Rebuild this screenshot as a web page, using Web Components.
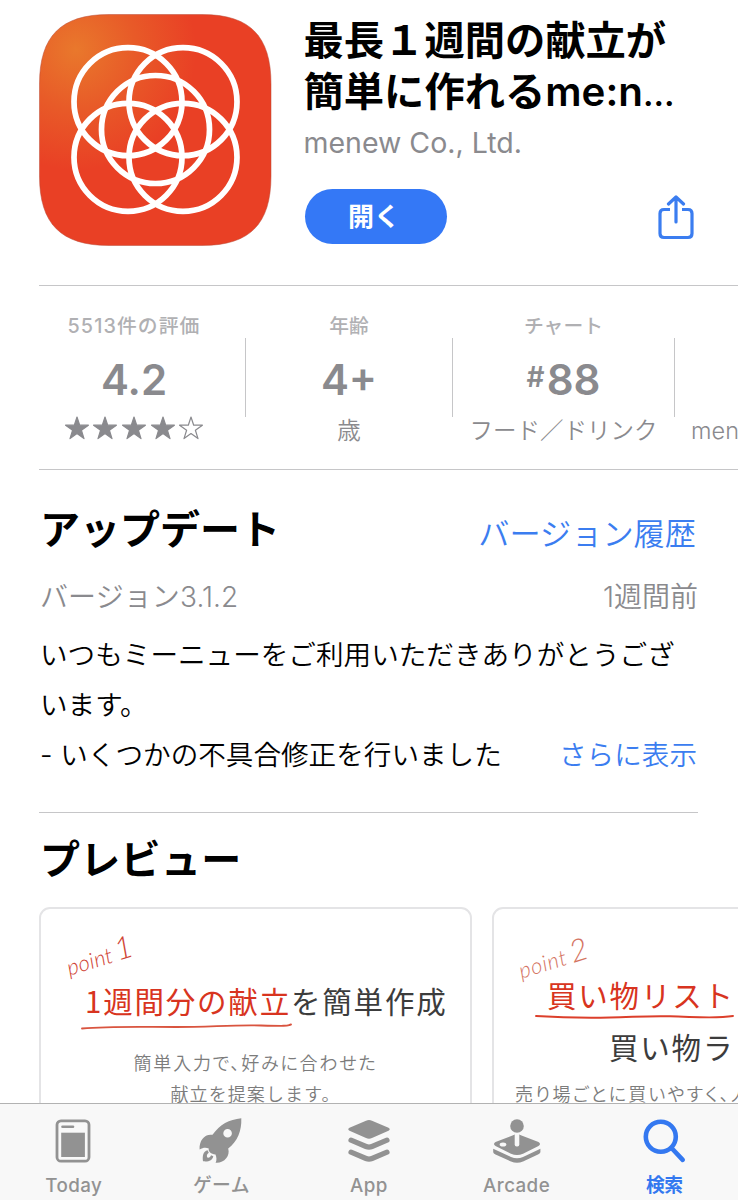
<!DOCTYPE html>
<html lang="ja">
<head>
<meta charset="utf-8">
<title>App Store</title>
<style>
  body {
    margin: 0;
    background: #fff;
    font-family: Inter, "Noto Sans CJK JP", sans-serif;
    color: #000;
  }
</style>
</head>
<body>
<store-page>
  <app-header developer="menew Co., Ltd." action="開く">
    <span>最長１週間の献立が</span>
    <span>簡単に作れるme:n<small>…</small></span>
  </app-header>

  <stat-strip>
    <stat-cell style="--w: 207px; --shift: -8px; --ls: 1.100px" label="5513件の評価" value="4.2"><star-rating value="4"></star-rating></stat-cell>
    <stat-cell style="--w: 207px" label="年齢" value="4+">歳</stat-cell>
    <stat-cell style="--w: 222px" label="チャート" prefix="#" value="88">フード／ドリンク</stat-cell>
    <stat-cell style="--w: 63px; --align: left; --shift: 16px">men</stat-cell>
  </stat-strip>

  <update-section heading="アップデート" link="バージョン履歴" version="バージョン3.1.2" date="1週間前" more="さらに表示">
    <span>いつもミーニューをご利用いただきありがとうござ</span>
    <span>います。</span>
    <span>- いくつかの不具合修正を行いました</span>
  </update-section>

  <preview-section heading="プレビュー">
    <preview-card class="one" point="point" num="1">
      <span slot="title"><b>1週間分の献立</b>を簡単作成</span>
      <svg slot="line" width="212" height="7" viewBox="0 0 212 7"><path d="M1 5.500C30 3 60 4 95 4S150 1.800 180 2.500S205 2.800 210 1.500" fill="none" stroke="#d9543f" stroke-width="1.900" stroke-linecap="round"/></svg>
      <span slot="desc">簡単入力で、好みに合わせた</span>
      <span slot="desc" class="full">献立を提案します。</span>
    </preview-card>
    <preview-card class="two" point="point" num="2">
      <span slot="title"><b>買い物リスト</b></span>
      <svg slot="line" width="200" height="6" viewBox="0 0 200 6"><path d="M1 2C25 3.500 50 4 75 3.500S110 1.800 135 2.300S180 5 198 2" fill="none" stroke="#dc3f2b" stroke-width="1.900" stroke-linecap="round"/></svg>
      <span slot="second">買い物ラ</span>
      <span slot="desc">売り場ごとに買いやすく、人</span>
    </preview-card>
  </preview-section>

  <tab-bar slot="tabs">
    <tab-item icon="today">Today</tab-item>
    <tab-item icon="game">ゲーム</tab-item>
    <tab-item icon="app">App</tab-item>
    <tab-item icon="arcade">Arcade</tab-item>
    <tab-item icon="search" active>検索</tab-item>
  </tab-bar>
</store-page>

<script>
  class StorePage extends HTMLElement {
    constructor() {
      super();
      this.attachShadow({ mode: 'open' }).innerHTML = `
        <style>
          :host {
            display: flex;
            flex-direction: column;
            width: 738px;
            height: 1200px;
            overflow: hidden;
          }
          main {
            flex: 1;
            min-height: 0;
            overflow: hidden;
          }
        </style>
        <main><slot></slot></main>
        <slot name="tabs"></slot>
      `;
    }
  }

  class AppHeader extends HTMLElement {
    connectedCallback() {
      this.attachShadow({ mode: 'open' }).innerHTML = `
        <style>
          :host {
            display: flex;
            gap: 31.500px;
            padding: 14px 44px 0 39px;
            height: 285px;
            box-sizing: border-box;
          }
          .logo { display: block; flex: none; }
          .info { flex: 1; }
          h1 {
            margin: 0;
            padding-top: 1px;
            font-size: 40.300px;
            line-height: 51px;
            font-weight: 600;
            white-space: nowrap;
          }
          ::slotted(span) { display: block; }
          .dev {
            line-height: 36px;
            margin-top: 8px;
            font-size: 28.500px;
            color: #8a8a8e;
            white-space: nowrap;
          }
          .row {
            display: flex;
            justify-content: space-between;
            margin-top: 28px;
            height: 55px;
          }
          button {
            width: 142px;
            height: 55px;
            margin: 0 0 0 1px;
            padding: 0 3px 0 0;
            border: 0;
            border-radius: 28px;
            background: #3478f6;
            color: #fff;
            font: 600 26px/55px Inter, "Noto Sans CJK JP", sans-serif;
          }
          .share { margin-top: 6px; }
        </style>
        <svg class="logo" width="233" height="232" viewBox="39 14 233 232">
          <defs>
            <radialGradient id="bg" gradientUnits="userSpaceOnUse" cx="76" cy="50" r="120">
              <stop offset="0" stop-color="#e9782c"/>
              <stop offset=".5" stop-color="#e85a28"/>
              <stop offset="1" stop-color="#e94025"/>
            </radialGradient>
          </defs>
          <path d="M109 14.500H202C250 14.500 271 36 271 84V176C271 224 250 245.500 202 245.500H109C61 245.500 39.500 224 39.500 176V84C39.500 36 61 14.500 109 14.500Z" fill="url(#bg)" stroke="#b94a35" stroke-opacity=".5"/>
          <g fill="none" stroke="#fff" stroke-width="5.700">
            <circle cx="128" cy="101.700" r="54"/>
            <circle cx="183" cy="101.700" r="54"/>
            <circle cx="128" cy="157.300" r="54"/>
            <circle cx="183" cy="157.300" r="54"/>
            <circle cx="155.500" cy="129.500" r="54"/>
          </g>
        </svg>
        <div class="info">
          <h1><slot></slot></h1>
          <div class="dev">${this.getAttribute('developer')}</div>
          <div class="row">
            <button>${this.getAttribute('action')}</button>
            <svg class="share" width="36" height="45" viewBox="0 0 36 45" fill="none" stroke="#3b7df0" stroke-width="3.200" stroke-linecap="round" stroke-linejoin="round">
              <path d="M12 14.500H6Q2 14.500 2 18.500V38.500Q2 42.500 6 42.500H30Q34 42.500 34 38.500V18.500Q34 14.500 30 14.500H24" stroke-linecap="butt"/>
              <path d="M18 27V2.500M10.500 9L18 2L25.500 9"/>
            </svg>
          </div>
        </div>
      `;
      this.querySelectorAll('small').forEach((s) => {
        s.style.fontSize = '33px';
        s.style.lineHeight = '1';
      });
    }
  }

  class StatStrip extends HTMLElement {
    constructor() {
      super();
      this.attachShadow({ mode: 'open' }).innerHTML = `
        <style>
          :host {
            display: flex;
            margin-left: 39px;
            height: 183px;
            border-top: 1px solid #c6c6c8;
            border-bottom: 1px solid #c6c6c8;
            overflow: hidden;
          }
        </style>
        <slot></slot>
      `;
    }
  }

  class StatCell extends HTMLElement {
    connectedCallback() {
      const prefix = this.getAttribute('prefix') || '';
      this.attachShadow({ mode: 'open' }).innerHTML = `
        <style>
          :host {
            display: flex;
            flex: none;
            width: var(--w);
            white-space: nowrap;
            text-align: var(--align, center);
            color: #8a8a8e;
          }
          .body {
            flex: 1;
            min-width: 0;
            padding-top: 25px;
            display: grid;
            grid-template-rows: 26px 86px 15px;
            align-items: center;
            transform: translateX(var(--shift, 0));
          }
          .label {
            font-size: 19.800px;
            font-weight: 500;
            color: #b0b0b3;
            letter-spacing: var(--ls, 0);
          }
          .value {
            font-size: 42px;
            font-weight: 600;
            line-height: 50px;
          }
          .value small {
            font-size: 28px;
            line-height: 1;
            vertical-align: 8px;
            font-weight: 600;
            margin-right: 2px;
          }
          .sub {
            font-size: 23.500px;
            line-height: 30px;
            font-weight: 350;
          }
          i {
            width: 1px;
            height: 79px;
            margin-top: 52px;
            background: #c6c6c8;
          }
          :host(:last-of-type) i { display: none; }
        </style>
        <div class="body">
          <div class="label">${this.getAttribute('label') || ''}</div>
          <div class="value">${prefix ? `<small>${prefix}</small>` : ''}${this.getAttribute('value') || ''}</div>
          <div class="sub"><slot></slot></div>
        </div>
        <i></i>
      `;
    }
  }

  class StarRating extends HTMLElement {
    connectedCallback() {
      const value = Number(this.getAttribute('value'));
      const pts = '12,1 14.700,9.200 23.400,9.200 16.400,14.300 19,22.600 12,17.500 5,22.600 7.600,14.300 0.600,9.200 9.300,9.200';
      let stars = '';
      for (let i = 0; i < 5; i++) {
        stars += `<svg width="24" height="24" viewBox="0 0 24 24"><polygon points="${pts}" fill="${i < value ? '#8a8a8e' : 'none'}" stroke="#8a8a8e" stroke-width="1.200" stroke-linejoin="round"/></svg>`;
      }
      this.attachShadow({ mode: 'open' }).innerHTML = `
        <style>
          :host { display: flex; justify-content: center; gap: 4.600px; margin-top: -6px; }
        </style>
        ${stars}
      `;
    }
  }

  class UpdateSection extends HTMLElement {
    connectedCallback() {
      const a = (n) => this.getAttribute(n);
      this.attachShadow({ mode: 'open' }).innerHTML = `
        <style>
          :host {
            display: block;
            margin: 0 40px 0 39px;
            height: 343px;
            box-sizing: border-box;
            border-bottom: 1px solid #c6c6c8;
            padding-top: 35px;
            white-space: nowrap;
            font-weight: 350;
          }
          .row {
            display: flex;
            justify-content: space-between;
            padding-left: 1px;
          }
          h2 {
            margin: 0;
            font-size: 40px;
            line-height: 50px;
            font-weight: 700;
          }
          a { color: #3b7df0; }
          .history {
            font-size: 31.200px;
            line-height: 58px;
            margin-right: 2px;
          }
          .meta {
            margin-top: 14px;
            height: 40px;
            line-height: 40px;
            font-size: 28px;
            color: #8a8a8e;
          }
          .meta span:first-child { letter-spacing: .1px; }
          .notes {
            margin-top: 13px;
            line-height: 50px;
            font-size: 27.600px;
            align-items: flex-end;
          }
          .notes a { margin-right: 1px; }
          ::slotted(span) { display: block; }
        </style>
        <div class="row">
          <h2>${a('heading')}</h2>
          <a class="history">${a('link')}</a>
        </div>
        <div class="row meta"><span>${a('version')}</span><span>${a('date')}</span></div>
        <div class="row notes">
          <div><slot></slot></div>
          <a style="margin-left: -200px">${a('more')}</a>
        </div>
      `;
    }
  }

  class PreviewSection extends HTMLElement {
    connectedCallback() {
      this.attachShadow({ mode: 'open' }).innerHTML = `
        <style>
          :host { display: block; padding: 22px 0 0 39px; }
          h2 {
            margin: 0 0 0 1px;
            font-size: 40px;
            line-height: 50px;
            font-weight: 700;
            letter-spacing: .3px;
          }
          .cards { display: flex; gap: 20px; margin-top: 22px; }
        </style>
        <h2>${this.getAttribute('heading')}</h2>
        <div class="cards"><slot></slot></div>
      `;
    }
  }

  class PreviewCard extends HTMLElement {
    connectedCallback() {
      this.attachShadow({ mode: 'open' }).innerHTML = `
        <style>
          :host {
            display: block;
            flex: none;
            box-sizing: border-box;
            width: 433px;
            height: 700px;
            border: 2px solid #e4e4e6;
            border-radius: 11px;
            font-family: "Noto Sans CJK JP", sans-serif;
            white-space: nowrap;
          }
          .point {
            width: 90px;
            height: 36px;
            margin: 24px 0 0 23px;
            font: italic 300 22px/36px Lato, sans-serif;
            letter-spacing: .2px;
            word-spacing: -2px;
            color: #d04535;
            transform: rotate(-17deg);
          }
          .point em { font-size: 31px; font-weight: 300; }
          .title, .second {
            color: #3c3c3c;
            font-size: 29.500px;
            line-height: 44px;
            letter-spacing: 1.800px;
          }
          .title { margin: 9px 0 0 44px; }
          ::slotted(svg) { display: block; margin: 1px 0 0 40px; }
          ::slotted(span) { display: block; }
          .second { display: none; }
          .desc {
            margin-top: 17px;
            text-align: center;
            font-size: 18px;
            line-height: 31px;
            letter-spacing: 1.800px;
            font-feature-settings: "palt";
            font-weight: 350;
            color: #7c7c7c;
          }
          ::slotted(.full) {
            font-feature-settings: normal;
            letter-spacing: 1.100px;
          }
          :host(.two) .point {
            margin: 27px 0 0 22px;
            color: #d47462;
            letter-spacing: .7px;
          }
          :host(.two) .title { margin: 0 0 0 53px; }
          :host(.two) ::slotted(svg) { margin: -2px 0 0 41px; }
          :host(.two) .second { display: block; margin: 4px 0 0 115px; }
          :host(.two) .desc {
            margin: 10px 0 0 21px;
            text-align: left;
            letter-spacing: 2.200px;
          }
        </style>
        <div class="point">${this.getAttribute('point')} <em>${this.getAttribute('num')}</em></div>
        <div class="title"><slot name="title"></slot></div>
        <slot name="line"></slot>
        <div class="second"><slot name="second"></slot></div>
        <div class="desc"><slot name="desc"></slot></div>
      `;
      this.querySelectorAll('b').forEach((b) => {
        b.style.fontWeight = 'inherit';
        b.style.color = '#d83420';
      });
    }
  }

  class TabBar extends HTMLElement {
    constructor() {
      super();
      this.attachShadow({ mode: 'open' }).innerHTML = `
        <style>
          :host {
            display: grid;
            grid-template-columns: repeat(5, 1fr);
            flex: none;
            height: 97px;
            box-sizing: border-box;
            border-top: 1px solid #b2b2b2;
            background: #f8f8f8;
          }
        </style>
        <slot></slot>
      `;
    }
  }

  const ICONS = {
    today: `
      <rect x="13" y="5.800" width="32" height="40.400" rx="4" fill="none" stroke="currentColor" stroke-width="2.800"/>
      <path d="M18.500 11.700H29" stroke="currentColor" stroke-width="2.600" stroke-linecap="round"/>
      <rect x="17.200" y="17.700" width="23.700" height="24.300"/>`,
    game: `
      <path fill-rule="evenodd" d="M50.300 3.300C38 4.500 29 9.500 21.500 19.800C14 18.500 8 25 8.600 34.500C12 32.500 15 32.500 17.800 33.500C17 36.500 20 39 24.500 39.500C25.500 42 26 45 24.600 47.800C33 48.500 39.500 41 37.200 33.500C46.500 26.500 50.800 16 50.300 3.300ZM36.600 14A4.300 4.300 0 1 0 36.600 22.600A4.300 4.300 0 1 0 36.600 14Z"/>
      <path d="M16.600 35.300C12 36.500 11.300 41 12 46.300C17.500 47 21.500 45.500 22.300 41.200L20 40.300C19.500 42.300 18 43 16.200 42.500C15.500 40.500 16 38.800 17.800 37.800Z"/>`,
    app: `
      <path d="M27 5.800Q30 4.400 33 5.800L49.500 12.700Q52 14.300 49.500 15.800L33 23Q30 24.500 27 23L10.500 15.800Q8 14.300 10.500 12.700Z"/>
      <path d="M12 25.200L27 31.500Q30 32.700 33 31.500L48 25.200M12 37.200L27 43.500Q30 44.700 33 43.500L48 37.200" fill="none" stroke="currentColor" stroke-width="5.200" stroke-linecap="round"/>`,
    arcade: `
      <path d="M25.500 20.500Q30 17.800 34.500 20.500L51.500 27Q54.500 28.800 51.500 31L36 38.800Q30 41.300 24 38.800L8.500 31Q5.500 28.800 8.500 27Z"/>
      <path d="M6.200 33.800L24 42Q30 44.500 36 42L53.400 33.800V37.200Q53 38.500 51 39.500L36 46.500Q30 49 24 46.500L8.500 39.500Q6.500 38.500 6.200 37.200Z"/>
      <ellipse cx="16" cy="29.500" rx="3.300" ry="2" fill="#f8f8f8"/>
      <rect x="27.700" y="17" width="4.600" height="14.500" rx="2" fill="#f8f8f8"/>
      <circle cx="30" cy="11" r="6.800"/>`,
    search: `
      <g fill="none" stroke="currentColor" stroke-width="4.600" stroke-linecap="round">
        <circle cx="26.800" cy="21.700" r="15"/>
        <path d="M38 33.500L48.700 44.900"/>
      </g>`
  };

  class TabItem extends HTMLElement {
    connectedCallback() {
      this.attachShadow({ mode: 'open' }).innerHTML = `
        <style>
          :host {
            display: flex;
            flex-direction: column;
            align-items: center;
            padding-top: 11px;
            color: #929292;
            font-size: 18.800px;
            line-height: 24px;
            font-weight: 500;
            letter-spacing: .4px;
          }
          :host([active]) { color: #3478f0; font-weight: 600; letter-spacing: -.5px; }
          svg { display: block; margin-bottom: 7px; }
        </style>
        <svg width="60" height="52" viewBox="0 0 60 52" fill="currentColor">${ICONS[this.getAttribute('icon')]}</svg>
        <slot></slot>
      `;
    }
  }

  customElements.define('store-page', StorePage);
  customElements.define('app-header', AppHeader);
  customElements.define('stat-strip', StatStrip);
  customElements.define('stat-cell', StatCell);
  customElements.define('star-rating', StarRating);
  customElements.define('update-section', UpdateSection);
  customElements.define('preview-section', PreviewSection);
  customElements.define('preview-card', PreviewCard);
  customElements.define('tab-bar', TabBar);
  customElements.define('tab-item', TabItem);
</script>
</body>
</html>
